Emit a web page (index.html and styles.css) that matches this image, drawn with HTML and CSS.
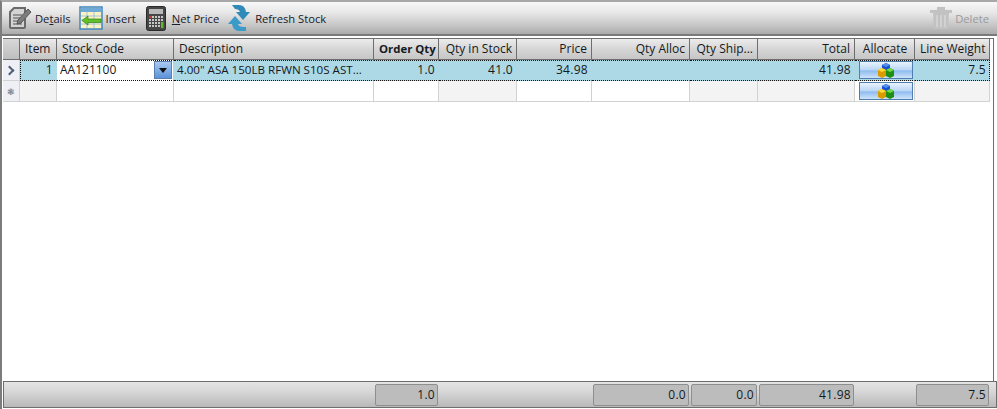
FILE: index.html
```html
<!DOCTYPE html>
<html lang="en">
<head>
    <meta charset="UTF-8">
    <title>Order Lines</title>
    <link rel="stylesheet" href="styles.css">
</head>
<body>
    <svg class="defs" width="0" height="0">
        <symbol id="cubes" viewBox="0 0 16 16">
            <path d="M4 3 8 1l4 2v5L8 10 4 8z" fill="#1a50d0"/>
            <path d="M4 3l4 2 4-2-4-2z" fill="#4f90f0"/>
            <path d="M0 8l4-2 4 2v6l-4 2-4-2z" fill="#d89c00"/>
            <path d="M0 8l4 2 4-2-4-2z" fill="#ffd83a"/>
            <path d="M8 8l4-2 4 2v6l-4 2-4-2z" fill="#1f8f14"/>
            <path d="M8 8l4 2 4-2-4-2z" fill="#6fd848"/>
        </symbol>
    </svg>

    <div class="frame">
        <div class="toolbar">
            <a class="tool">
                <svg class="icon" width="24" height="24" viewBox="0 0 24 24">
                    <path d="M2 6 6 2h11v19a1 1 0 0 1-1 1H3a1 1 0 0 1-1-1z" fill="#d4d4d4" stroke="#6a6a6a" stroke-width="2"/>
                    <path d="M5 9h9M5 12h8M5 15h7M5 18h9" stroke="#7e7e7e" stroke-width="1.400"/>
                    <path d="M10 14 20 3l3 3-10 11-4 1z" fill="#7c7c7c" stroke="#565656"/>
                </svg>
                <span>De<u>t</u>ails</span>
            </a>
            <a class="tool tool-insert">
                <svg class="icon" width="24" height="24" viewBox="0 0 24 24">
                    <rect x="1" y="1" width="22" height="22" fill="#fdf3c0" stroke="#3f86c0" stroke-width="1.500"/>
                    <rect x="2" y="2" width="20" height="4" fill="#6fa9d8"/>
                    <path d="M8 6v16M15 6v16M2 10h20M2 14h20M2 18h20" stroke="#a3c4de" fill="none"/>
                    <path d="M3 14.500 9 10v3h13v3.500H9v2.500z" fill="#62c02c" stroke="#2f7f18" stroke-width=".7"/>
                </svg>
                <span>Insert</span>
            </a>
            <a class="tool tool-price">
                <svg class="icon" width="20" height="25" viewBox="0 0 20 25">
                    <rect x="0.500" y="0.500" width="19" height="24" rx="2" fill="#464646" stroke="#2a2a2a"/>
                    <rect x="3" y="3" width="14" height="5" fill="#b8b8b8"/>
                    <path d="M3 11h14M3 14h14M3 17h14M3 20h14" stroke="#f2f2f2" stroke-width="1.500" stroke-dasharray="2 1"/>
                    <rect x="3" y="10" width="3" height="2" fill="#c0392b"/>
                    <rect x="15" y="16" width="2.500" height="6" fill="#5cb82e"/>
                </svg>
                <span><u>N</u>et Price</span>
            </a>
            <a class="tool tool-refresh">
                <svg class="icon" width="22" height="26" viewBox="0 0 22 26">
                    <path d="M4 0h7q6 0 7 7h4l-7 8-7-8h4q-1-3-5-3H7z" fill="#2f8ab8"/>
                    <path d="M18 26h-7q-6 0-7-7H0l7-8 7 8h-4q1 3 5 3h3z" fill="#3a9ac8"/>
                </svg>
                <span>Refresh Stock</span>
            </a>
            <a class="tool tool-delete">
                <svg class="icon" width="22" height="22" viewBox="0 0 22 22">
                    <path d="M0 3h22v3H0zM7 0h8v3H7z" fill="#c2c2c2"/>
                    <path d="M3 6h16l-1 16H4z" fill="#c2c2c2"/>
                    <path d="M7 8v12M11 8v12M15 8v12" stroke="#d8d8d8" stroke-width="1.500"/>
                </svg>
                <span>Delete</span>
            </a>
        </div>

        <div class="grid-area">
            <div class="row head">
                <div class="cell rowhead"></div>
                <div class="cell">Item</div>
                <div class="cell">Stock Code</div>
                <div class="cell">Description</div>
                <div class="cell right bold">Order Qty</div>
                <div class="cell right">Qty in Stock</div>
                <div class="cell right">Price</div>
                <div class="cell right">Qty Alloc</div>
                <div class="cell right">Qty Ship...</div>
                <div class="cell right">Total</div>
                <div class="cell center">Allocate</div>
                <div class="cell right">Line Weight</div>
            </div>

            <div class="row data selected">
                <div class="cell rowhead"><span class="chevron"></span></div>
                <div class="cell right first">1</div>
                <div class="cell editor">AA121100<span class="dropdown"></span></div>
                <div class="cell desc">4.00" ASA 150LB RFWN S10S AST...</div>
                <div class="cell right">1.0</div>
                <div class="cell right">41.0</div>
                <div class="cell right">34.98</div>
                <div class="cell"></div>
                <div class="cell"></div>
                <div class="cell right">41.98</div>
                <div class="cell btn-cell"><span class="alloc"><svg width="16" height="16"><use href="#cubes"/></svg></span></div>
                <div class="cell right last">7.5</div>
            </div>

            <div class="row data">
                <div class="cell rowhead"><span class="star">&#10051;</span></div>
                <div class="cell ro"></div>
                <div class="cell"></div>
                <div class="cell"></div>
                <div class="cell"></div>
                <div class="cell ro"></div>
                <div class="cell"></div>
                <div class="cell"></div>
                <div class="cell ro"></div>
                <div class="cell ro"></div>
                <div class="cell btn-cell"><span class="alloc"><svg width="16" height="16"><use href="#cubes"/></svg></span></div>
                <div class="cell ro"></div>
            </div>
        </div>

        <div class="footer">
            <div class="sum sum-order">1.0</div>
            <div class="sum sum-alloc">0.0</div>
            <div class="sum sum-ship">0.0</div>
            <div class="sum sum-total">41.98</div>
            <div class="sum sum-weight">7.5</div>
        </div>
    </div>
</body>
</html>
```

FILE: styles.css
```css
html, body {
    margin: 0;
    padding: 0;
    background: #fff;
}
body {
    font-family: "Open Sans", "Noto Sans", sans-serif;
    font-size: 12px;
    color: #141a22;
}
.defs {
    display: block;
    height: 0;
}
.frame {
    width: 997px;
    height: 409px;
    box-sizing: border-box;
    border-top: 2px solid #a8a8a8;
    border-left: 2px solid #7c7c7c;
    display: flex;
    flex-direction: column;
}

/* toolbar */
.toolbar {
    height: 34px;
    flex: none;
    box-sizing: border-box;
    display: flex;
    align-items: center;
    padding: 0 0 0 6px;
    font-size: 11.2px;
    background: linear-gradient(#f8f8f8 0%, #e6e6e6 35%, #c4c4c4 75%, #ababab 100%);
    border-bottom: 2px solid #7a7a7a;
}
.tool {
    display: flex;
    align-items: center;
    gap: 3px;
    color: #16202c;
}
.icon {
    flex: none;
}
.tool-insert {
    margin-left: 8px;
}
.tool-price {
    margin-left: 10px;
}
.tool-price span {
    margin-left: 3px;
}
.tool-refresh {
    margin-left: 9px;
}
.tool-refresh span {
    margin-left: 2px;
}
.tool-delete {
    margin-left: auto;
    margin-right: 8px;
    color: #9a9a9a;
}

/* grid */
.grid-area {
    flex: 1;
    margin: 2px 3px 0 1px;
    border-top: 1px solid #6e6e6e;
    border-right: 1px solid #6e6e6e;
}
.row {
    display: grid;
    grid-template-columns: 17px 37px 117px 200px 65px 78px 75px 98px 68px 97px 60px 75px;
    width: 987px;
}
.cell {
    box-sizing: border-box;
    padding: 0 3px;
    line-height: 20px;
    white-space: nowrap;
    overflow: hidden;
    border-right: 1px solid #d2d2d2;
    border-bottom: 1px solid #d2d2d2;
}
.right {
    text-align: right;
}
.center {
    text-align: center;
}
.head {
    height: 21px;
}
.head .cell {
    height: 21px;
    padding: 0 4px 0 5px;
    line-height: 20px;
    background: linear-gradient(#ececec, #d6d6d6 50%, #c6c6c6);
    border-right: 1px solid #6e6e6e;
    border-bottom: 1px solid #6e6e6e;
}
.head .bold {
    font-size: 11.400px;
    font-weight: 700;
}
.head .rowhead {
    background: linear-gradient(#d8d8d8, #bebebe);
}
.data {
    height: 21px;
}
.data .cell {
    height: 21px;
}
.data .right {
    letter-spacing: 0.3px;
}
.desc {
    font-size: 11.600px;
}
.rowhead {
    padding: 0;
    background: #eef0f6;
    display: flex;
    align-items: center;
    justify-content: center;
}
.ro {
    background: #f3f3f3;
}
.chevron {
    width: 5px;
    height: 5px;
    border-top: 2px solid #50607a;
    border-right: 2px solid #50607a;
    transform: rotate(45deg);
    margin-left: -3px;
}
.star {
    font-size: 9px;
    color: #7a8290;
    line-height: 1;
}
.selected .cell {
    background: #add8e6;
    line-height: 18px;
    border-top: 1px dotted #111;
    border-bottom: 1px dotted #111;
    border-right: 1px solid #add8e6;
}
.selected .first {
    border-left: 1px dotted #111;
}
.selected .last {
    border-right: 1px dotted #111;
}
.selected .rowhead {
    background: #eef0f6;
    border-top: 0;
    border-right-color: #d2d2d2;
    border-bottom: 1px solid #d2d2d2;
}
.selected .editor {
    background: #fff;
    display: flex;
    justify-content: space-between;
    padding: 0 1px 0 3px;
}
.dropdown {
    width: 18px;
    height: 18px;
    flex: none;
    box-sizing: border-box;
    background: linear-gradient(#a9c8ee, #5b93da);
    border: 1px solid #5a7fb0;
    position: relative;
}
.dropdown::after {
    content: "";
    position: absolute;
    left: 4px;
    top: 6px;
    border-left: 4px solid transparent;
    border-right: 4px solid transparent;
    border-top: 5px solid #111;
}
.cell.btn-cell {
    padding: 1px 0 0 4px;
}
.selected .cell.btn-cell {
    padding-top: 0;
}
.alloc {
    box-sizing: border-box;
    width: 54px;
    height: 18px;
    display: flex;
    align-items: center;
    justify-content: center;
    border: 1px solid #4f7fb0;
    background: linear-gradient(#eaf3fd, #b9d5f5 50%, #8ebcef 55%, #cfe3fa);
}

/* totals */
.footer {
    flex: none;
    height: 27px;
    margin: 0 0 1px 1px;
    box-sizing: border-box;
    border: 1px solid #6e6e6e;
    background: linear-gradient(#e4e4e4, #d6d6d6 40%, #b8b8b8);
    display: flex;
    align-items: center;
}
.sum {
    box-sizing: border-box;
    height: 22px;
    line-height: 20px;
    padding: 0 2px 0 0;
    text-align: right;
    letter-spacing: 0.3px;
    background: #bcbcbc;
    border: 1px solid #8e8e8e;
    border-radius: 2px;
}
.sum-order {
    margin-left: 371px;
    width: 63px;
}
.sum-alloc {
    margin-left: 155px;
    width: 96px;
}
.sum-ship {
    margin-left: 2px;
    width: 66px;
}
.sum-total {
    margin-left: 2px;
    width: 95px;
}
.sum-weight {
    margin-left: 62px;
    width: 73px;
}
```
